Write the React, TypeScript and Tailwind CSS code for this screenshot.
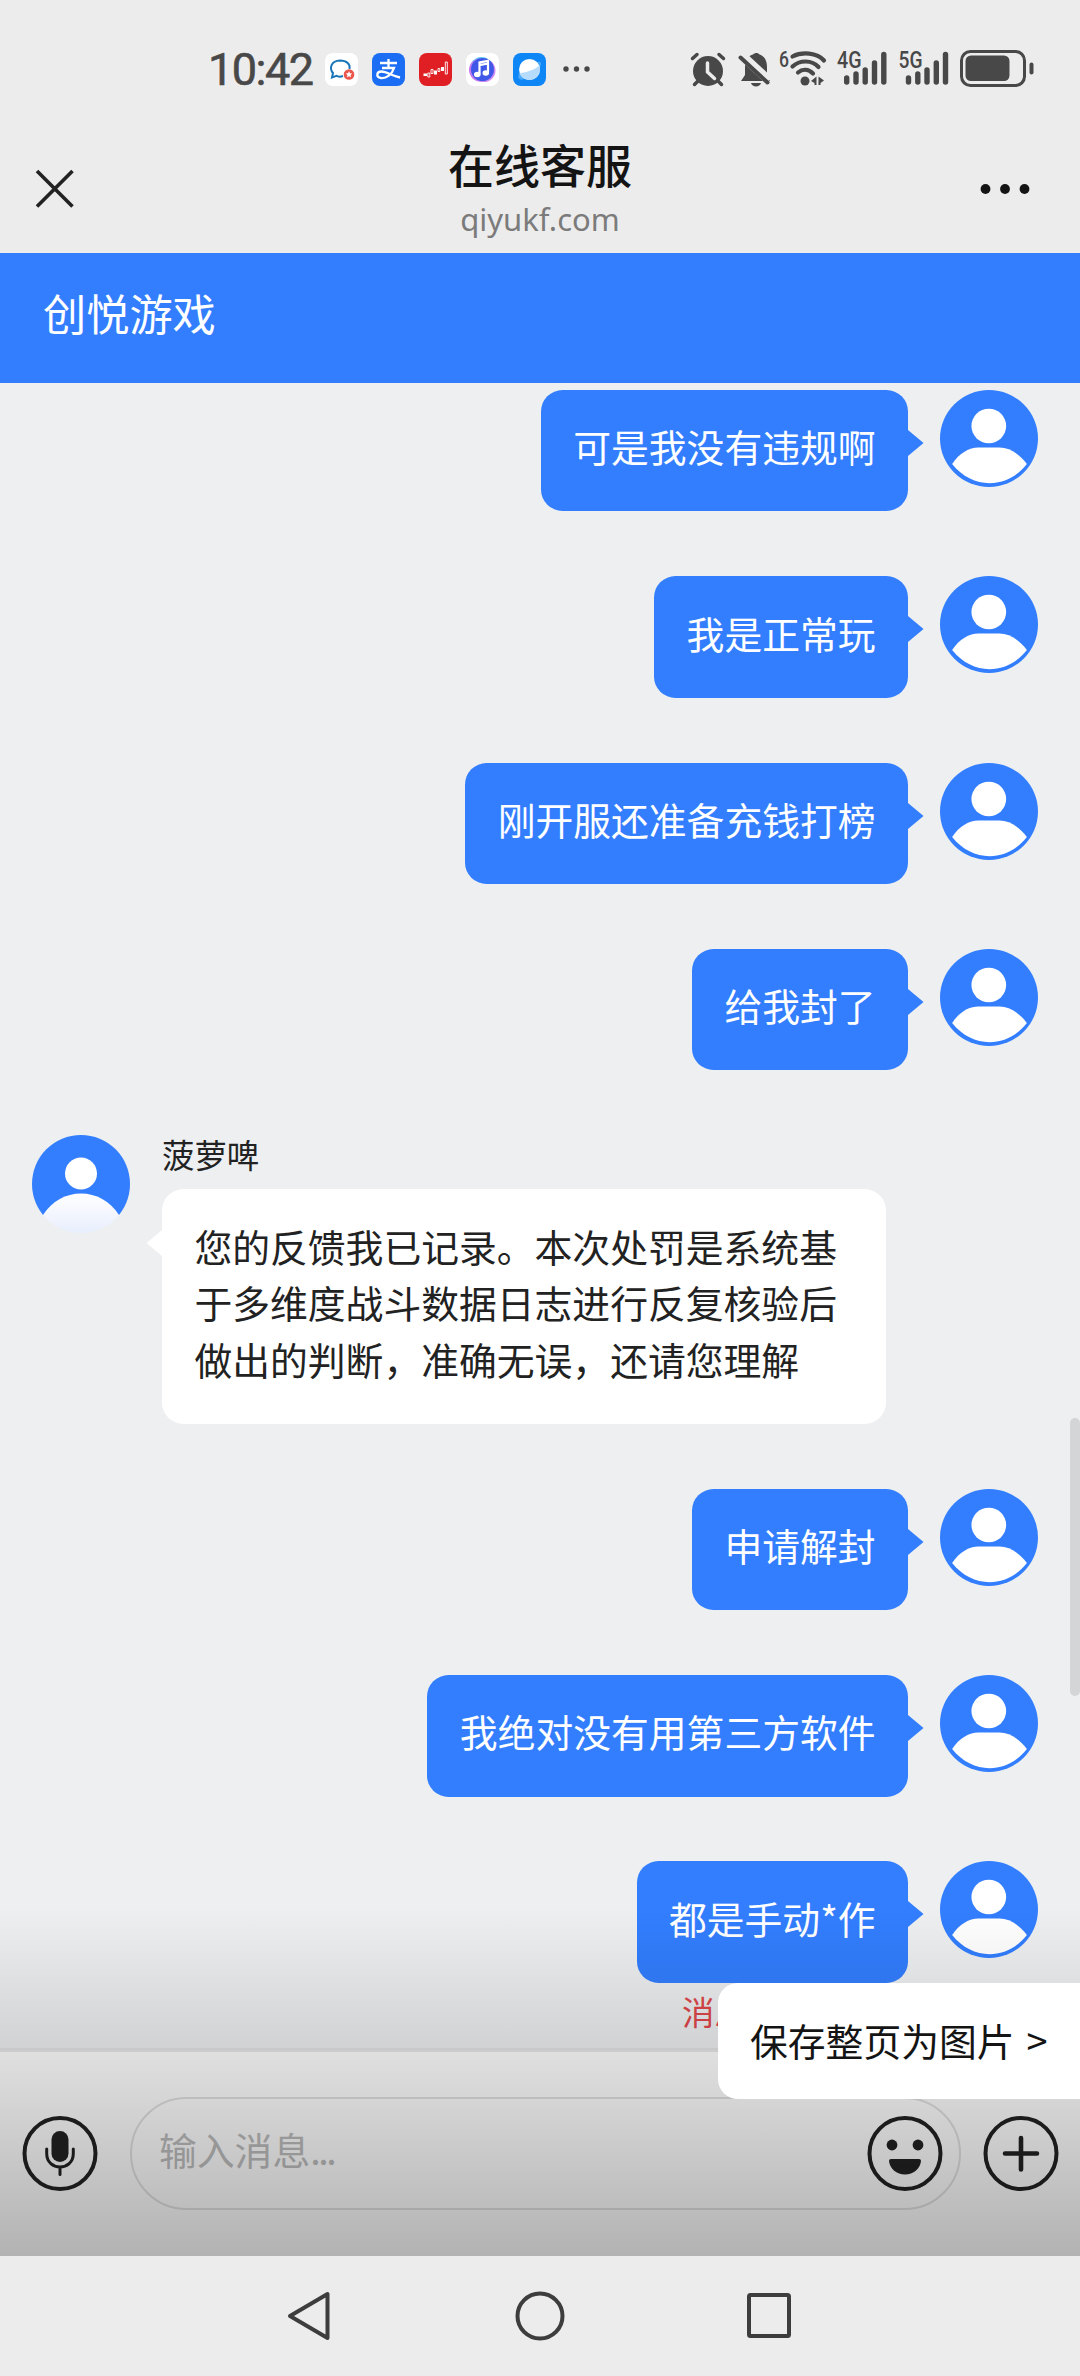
const UserAvatar = () => (
  <svg viewBox="0 0 97 97" className="h-[97px] w-[98px] shrink-0" preserveAspectRatio="none">
    <circle cx="48.5" cy="48.5" r="48.5" fill="#327eff" />
    <circle cx="48.3" cy="36" r="17.2" fill="#fff" />
    <path d="M12 74 C19 63 29 57.5 38 57.5 H59 C68 57.5 78 63 86 74 C66 99.500 32 99.500 12 74 Z" fill="#fff" />
  </svg>
);

const AgentAvatar = () => (
  <svg viewBox="0 0 98 98" className="h-[98px] w-[98px] shrink-0">
    <defs>
      <linearGradient id="agentBody" x1="0" y1="0" x2="0" y2="1">
        <stop offset="0" stopColor="#fff" />
        <stop offset="1" stopColor="#e8eefd" />
      </linearGradient>
      <clipPath id="agentClip">
        <circle cx="49" cy="49" r="49" />
      </clipPath>
    </defs>
    <g clipPath="url(#agentClip)">
      <path d="M0 0 H98 V80 H0 Z" fill="#327eff" />
      <circle cx="49" cy="38.500" r="16" fill="#fff" />
      <path d="M11 80 C20 66 34 58.500 49 58.500 C64 58.500 78 66 87 80 V98 H11 Z" fill="url(#agentBody)" />
    </g>
  </svg>
);

const UserMessage = ({ text }: { text: string }) => (
  <div className="flex items-start justify-end pr-[42px]">
    <div className="rounded-[21.6px] bg-[#327eff] px-[32.4px] pt-[28.4px] pb-[36.4px] text-[37.8px] leading-[56.7px] text-white">
      {text}
    </div>
    <svg viewBox="0 0 16 26" className="mt-10 mr-4 h-[26px] w-4 shrink-0">
      <path d="M0 0 L15.500 13 L0 26 Z" fill="#327eff" />
    </svg>
    <UserAvatar />
  </div>
);

const StatusBar = () => (
  <div className="flex h-[138px] items-start pl-[208px] text-[#484848]">
    <span className="mt-[43px] w-[110px] whitespace-nowrap font-['Roboto',sans-serif] text-[45px] leading-[54px] tracking-[-1.5px] [-webkit-text-stroke:0.6px_#484848]">
      10:42
    </span>

    {/* Running app icons */}
    <div className="mt-[53px] ml-[7px] flex gap-[14px]">
      <svg viewBox="0 0 33 33" className="h-[33px] w-[33px]">
        <rect width="33" height="33" rx="8" fill="#fff" />
        <path d="M18 23 C15 24 12.500 23.500 11.500 22.800 L7 24.500 L8 20 C4 15.500 6 7.800 15 7.500 C22 7.500 25.500 11.500 24.500 16" fill="none" stroke="#1976b8" strokeWidth="2" />
        <circle cx="24" cy="21.500" r="5.300" fill="#e9574d" />
        <path d="M24 18.300 l1 2 2.200 .3 -1.600 1.500 .4 2.200 -2 -1 -2 1 .4 -2.200 -1.600 -1.500 2.200 -.3z" fill="#fff" />
      </svg>
      <svg viewBox="0 0 33 33" className="h-[33px] w-[33px]">
        <rect width="33" height="33" rx="8" fill="#1b6df3" />
        <path d="M8 10 H25 M16.500 6 V14.500 M10 15 H22 C20 21.500 14.500 25.500 9 25 C3.500 24 4.500 18.500 9.500 18.500 C14.500 18.500 20 23 28 24.500" fill="none" stroke="#fff" strokeWidth="2.300" />
      </svg>
      <svg viewBox="0 0 33 33" className="h-[33px] w-[33px]">
        <rect width="33" height="33" rx="8" fill="#df1f24" />
        <g fill="#fff">
          <rect x="4.500" y="20.500" width="3.500" height="2.500" />
          <rect x="15" y="17.500" width="3" height="4" />
          <rect x="22" y="14" width="3" height="4" />
        </g>
        <path d="M8.800 20 h2 v4 h-2z M12 16.500 h2 v4 h-2z M19 15.500 h1.800 v3 h-1.800z M26.300 9 h2 v12 h-2z" fill="none" stroke="#fff" strokeWidth="0.9" />
      </svg>
      <svg viewBox="0 0 33 33" className="h-[33px] w-[33px]">
        <rect width="33" height="33" rx="8" fill="#fff" />
        <circle cx="15.500" cy="15.500" r="11.500" fill="#5ac8f5" />
        <circle cx="18" cy="17.500" r="11.500" fill="#d08bf5" />
        <circle cx="14.500" cy="17" r="11.500" fill="#c77af0" />
        <circle cx="16.500" cy="16.500" r="11.500" fill="#3f58e8" />
        <path d="M13.500 21 V9.500 L22 7.800 V19.500 M13.500 12.200 L22 10.500" fill="none" stroke="#fff" strokeWidth="2.200" />
        <ellipse cx="11.300" cy="21.500" rx="3.300" ry="2.800" fill="#fff" />
        <ellipse cx="19.800" cy="20" rx="3.300" ry="2.800" fill="#fff" />
      </svg>
      <svg viewBox="0 0 33 33" className="h-[33px] w-[33px]">
        <rect width="33" height="33" rx="8" fill="#0f86f5" />
        <path d="M6 21 C3.500 27 8 28 14 25 C22 21 28 15 28 10.500 C28 8.500 25 8.500 23 9.500" fill="#4aa9fa" />
        <circle cx="16.500" cy="16.500" r="10.500" fill="#fff" />
        <path d="M6.500 20 C14 20 22 16 26.500 12.500 C29 20 23 27 16.500 27 C12 27 8 24 6.500 20Z" fill="#b5dcfc" />
      </svg>
    </div>
    <svg viewBox="0 0 28 6" className="mt-[66px] ml-[17px] h-[6px] w-[28px]" fill="#484848">
      <circle cx="3" cy="3" r="2.700" />
      <circle cx="13.500" cy="3" r="2.700" />
      <circle cx="24" cy="3" r="2.700" />
    </svg>

    {/* Alarm, mute, wifi, signals and battery */}
    <svg viewBox="0 -20 350 60" className="mt-[29px] ml-[99px] h-[60px] w-[350px] shrink-0 overflow-visible" fill="#484848">
      <circle cx="18" cy="22" r="15" />
      <g fill="none" stroke="#484848" strokeWidth="3.500" strokeLinecap="round">
        <path d="M2.500 9.500 L7 5.500 M33.500 9.500 L29 5.500 M8 32 L4.500 35.500 M28 32 L31.500 35.500" />
      </g>
      <path d="M17.500 14 V23 L24.500 29.500" fill="none" stroke="#ececec" strokeWidth="3.500" strokeLinecap="round" />

      <path d="M51 32 L55 26 V19 C55 10 59 6.500 63 5.500 C65 3.500 68 3.500 69.500 5.500 C75 7.500 77 12 77 18 V26 L80 32 Z" />
      <path d="M61 34 H71 C70 38.500 62 38.500 61 34Z" />
      <path d="M50 4.500 L79 31.500" stroke="#ececec" strokeWidth="9" />
      <path d="M50.500 8.500 L77.500 33.500" stroke="#484848" strokeWidth="4" strokeLinecap="round" />

      <text x="89" y="17.500" fontFamily="Roboto" fontWeight="500" fontSize="22" textLength="10" lengthAdjust="spacingAndGlyphs">6</text>
      <g fill="none" stroke="#484848" strokeWidth="4.200" strokeLinecap="round">
        <path d="M102.500 7.500 C112 2.500 127 3.500 134 11.500" />
        <path d="M102.500 17.500 C110 10.500 122 11 128.500 18" />
        <path d="M108 23.500 C112.500 19.800 118.500 20 123 24.500" />
      </g>
      <circle cx="115" cy="32" r="4.500" />
      <path d="M121 32 L126.500 27.500 V36 H124.500 V34 Z M134 31.500 L128.500 27.500 V36 H130.500 V34Z" />

      <text x="147" y="19" fontFamily="Roboto" fontWeight="500" fontSize="23" textLength="24.500" lengthAdjust="spacingAndGlyphs">4G</text>
      <g stroke="#484848" strokeWidth="5.400" strokeLinecap="round">
        <path d="M156.700 29 V33 M166 25 V33 M175.200 21 V33 M184.500 14 V33 M193.800 5.500 V33" />
        <path d="M218.500 29 V33 M227.800 25 V33 M237 21 V33 M246.300 14 V33 M255.500 5.500 V33" />
      </g>
      <text x="208.500" y="19" fontFamily="Roboto" fontWeight="500" fontSize="23" textLength="24" lengthAdjust="spacingAndGlyphs">5G</text>

      <rect x="271.500" y="2.500" width="63" height="34" rx="9" fill="none" stroke="#484848" strokeWidth="3" />
      <rect x="275.500" y="6.500" width="44" height="25.500" rx="5.500" />
      <rect x="339.500" y="13.500" width="4" height="12" rx="2" />
    </svg>
  </div>
);

const TitleBar = () => (
  <div className="flex h-[115px] items-start justify-between pr-[48px] pl-[34px]">
    <svg viewBox="0 0 42 42" className="mt-[30px] h-[42px] w-[42px]">
      <path d="M3 3 L38.500 38.500 M38.500 3 L3 38.500" stroke="#222" strokeWidth="3.600" />
    </svg>
    <div className="flex flex-col items-center pl-[24px] text-center">
      <h1 className="text-[46px] leading-[50px] font-medium text-[#141414]">在线客服</h1>
      <p className="mt-[9px] font-['Noto_Sans',sans-serif] text-[31px] leading-[44px] text-[#7b7b7b]">qiyukf.com</p>
    </div>
    <svg viewBox="0 0 52 12" className="mt-[45px] h-3 w-[52px]" fill="#141414">
      <circle cx="5.500" cy="6" r="4.900" />
      <circle cx="25" cy="6" r="4.900" />
      <circle cx="44.500" cy="6" r="4.900" />
    </svg>
  </div>
);

const InputBar = () => (
  <div className="flex h-[206px] items-start border-t-2 border-[#e8e8e8] bg-white pl-[22px]">
    <svg viewBox="0 0 76 76" className="mt-[64px] h-[76px] w-[76px] shrink-0">
      <circle cx="38" cy="37.500" r="35.500" fill="none" stroke="#222" strokeWidth="4" />
      <rect x="29.500" y="15" width="17" height="31" rx="8.500" fill="#222" />
      <path d="M24.700 33 V37.500 C24.700 55.500 51.300 55.500 51.300 37.500 V33 M38 51 V58.500" fill="none" stroke="#222" strokeWidth="3" strokeLinecap="round" />
    </svg>
    <div className="mt-[45px] ml-8 flex h-[113px] w-[831px] shrink-0 items-start justify-between rounded-full border-2 border-[#e2e2e2] pr-[16px] pl-[27px]">
      <span className="mt-[20px] text-[37.8px] leading-[60px] text-[#bebebe]">
        输入消息<span className="tracking-[-2.5px]">...</span>
      </span>
      <svg viewBox="0 0 76 76" className="mt-[17px] h-[76px] w-[76px]">
        <circle cx="38" cy="37.500" r="35.500" fill="none" stroke="#222" strokeWidth="4" />
        <circle cx="25" cy="29" r="5.400" fill="#222" />
        <circle cx="51" cy="29" r="5.400" fill="#222" />
        <path d="M24 43 H52 Q54 43 54 45 C53 53 46.500 58.500 38 58.500 C29.500 58.500 23 53 22 45 Q22 43 24 43Z" fill="#222" />
      </svg>
    </div>
    <svg viewBox="0 0 76 76" className="mt-[64px] ml-[22px] h-[76px] w-[76px] shrink-0">
      <circle cx="38" cy="37.500" r="35.500" fill="none" stroke="#222" strokeWidth="4" />
      <path d="M38 22 V53.500 M22 37.500 H54" stroke="#222" strokeWidth="4.600" strokeLinecap="round" />
    </svg>
  </div>
);

const NavBar = () => (
  <div className="flex h-[120px] items-center bg-[#ececec] pl-[285px]">
    <svg viewBox="0 0 520 60" className="h-[60px] w-[520px]" fill="none" stroke="#3d3d3d" strokeWidth="4" strokeLinejoin="round">
      <path d="M5 30 L42.500 8 V52 Z" />
      <circle cx="255" cy="30" r="22.500" />
      <rect x="464" y="9" width="40" height="41" rx="1.500" />
    </svg>
  </div>
);

const App = () => {
  return (
    <div className="relative flex h-[2376px] w-[1080px] flex-col overflow-hidden bg-[#ececec] font-['Noto_Sans_CJK_SC',sans-serif]">
      <StatusBar />
      <TitleBar />

      <div className="flex h-[130px] items-start bg-[#327eff] pl-[43px]">
        <h2 className="mt-[29px] text-[43.2px] leading-[60px] text-white">创悦游戏</h2>
      </div>

      {/* Conversation */}
      <div className="flex h-[1667px] flex-col gap-[64.8px] border-b-2 border-[#e3e4e6] bg-[#edeff0] pt-[7px]">
        <UserMessage text="可是我没有违规啊" />
        <UserMessage text="我是正常玩" />
        <UserMessage text="刚开服还准备充钱打榜" />
        <UserMessage text="给我封了" />

        <div className="flex items-start pl-8">
          <AgentAvatar />
          <svg viewBox="0 0 16 26" className="mt-[95px] ml-4 h-[26px] w-4 shrink-0">
            <path d="M16 0 L0.500 13 L16 26 Z" fill="#fff" />
          </svg>
          <div className="flex flex-col">
            <span className="h-[54px] text-[32.4px] leading-[37px] text-[#222]">菠萝啤</span>
            <div className="w-[724px] rounded-[21.6px] bg-white px-[32.4px] pt-[28.4px] pb-[36.4px] text-[37.8px] leading-[56.7px] text-[#222]">
              您的反馈我已记录。本次处罚是系统基
              <br />
              于多维度战斗数据日志进行反复核验后
              <br />
              做出的判断，准确无误，还请您理解
            </div>
          </div>
        </div>

        <UserMessage text="申请解封" />
        <UserMessage text="我绝对没有用第三方软件" />
        <div className="flex flex-col">
          <UserMessage text="都是手动*作" />
          <span className="mt-[4px] ml-[682px] text-[32.4px] leading-[48px] text-[#e0474b]">消息</span>
        </div>
      </div>

      <InputBar />
      <NavBar />

      {/* Scrollbar thumb */}
      <div className="absolute top-[1418px] right-0 h-[278px] w-[10px] rounded-[5px] bg-[#d3d5d6]" />

      {/* Bottom shade and the save prompt over the page */}
      <div className="absolute top-[1908px] left-0 h-[348px] w-full bg-linear-to-b from-black/0 to-black/30" />
      <button className="absolute top-[1983px] right-0 flex h-[116px] w-[362px] items-center rounded-l-[20px] bg-white pb-[2px] pl-[32px] text-[37.8px] whitespace-nowrap text-[#141414]">
        保存整页为图片<span className="ml-[12px]">&gt;</span>
      </button>
    </div>
  );
};

export default App;
